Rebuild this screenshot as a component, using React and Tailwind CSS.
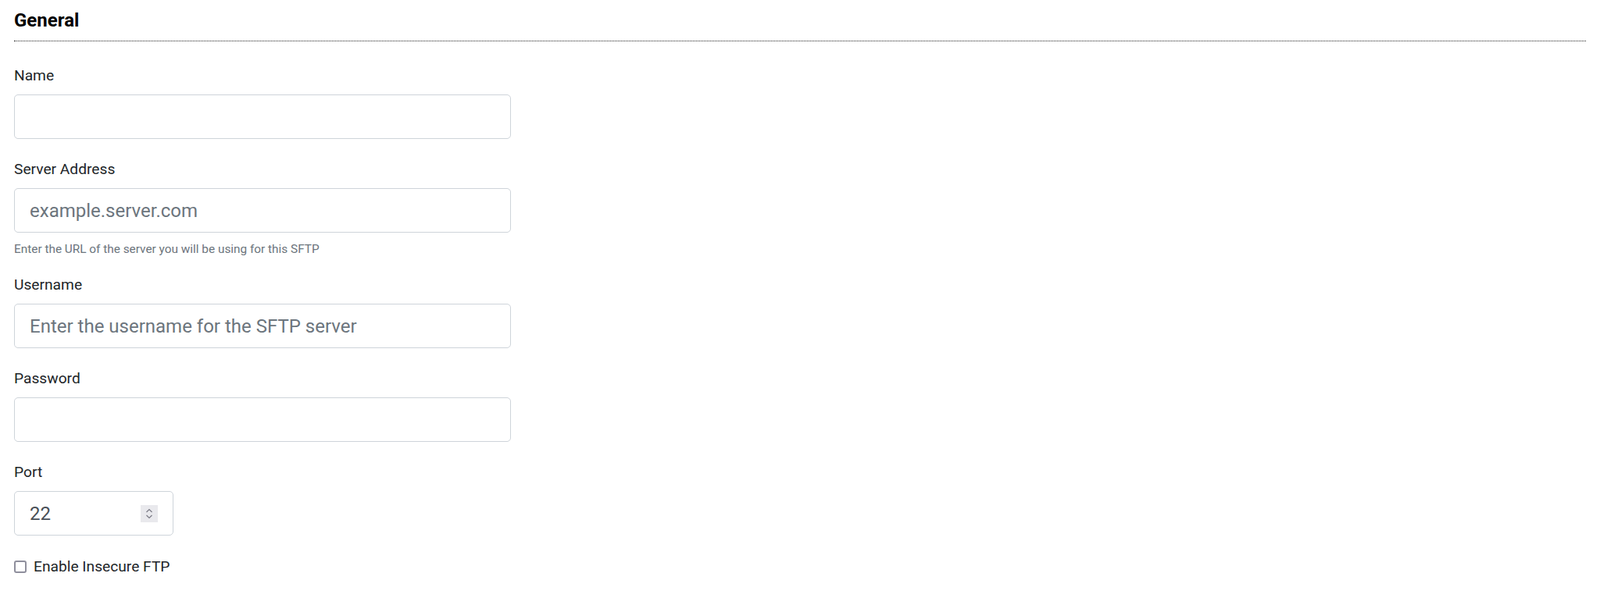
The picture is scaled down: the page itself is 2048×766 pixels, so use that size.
import React from "react";

const Label = ({ children }) => (
  <div className="h-6 text-[19.2px] leading-[26px] text-[#212529]">{children}</div>
);

const TextField = ({ placeholder, type = "text" }) => (
  <input
    type={type}
    placeholder={placeholder}
    className="mt-[13px] block h-[57px] w-[636px] rounded-[5px] border border-[#ced4da] bg-white px-[19px] text-[24px] text-[#495057] placeholder:text-[#6c757d] outline-none"
  />
);

const Spinner = () => (
  <div className="flex h-[22px] w-[22px] flex-col items-center justify-center gap-[2px] bg-[#e9e9ed]">
    <svg width="10" height="6" viewBox="0 0 10 6" fill="none">
      <path d="M1.5 5L5 1.5L8.5 5" stroke="#7a7a85" strokeWidth="1.2" />
    </svg>
    <svg width="10" height="6" viewBox="0 0 10 6" fill="none">
      <path d="M1.5 1L5 4.5L8.5 1" stroke="#7a7a85" strokeWidth="1.2" />
    </svg>
  </div>
);

export default function App() {
  return (
    <div className="min-h-screen bg-white px-[18px] pt-3 font-['Roboto',sans-serif]">
      <div className="border-b border-dotted border-[#222] pb-3">
        <h2 className="h-7 text-[24px] font-bold leading-7 text-black">General</h2>
      </div>

      <div className="mt-[31px] mb-[26px]">
        <Label>Name</Label>
        <TextField />
      </div>

      <div className="mb-[23px]">
        <Label>Server Address</Label>
        <TextField placeholder="example.server.com" />
        <p className="mt-[11px] h-5 text-[15.36px] leading-5 text-[#6c757d]">
          Enter the URL of the server you will be using for this SFTP
        </p>
      </div>

      <div className="mb-[26px]">
        <Label>Username</Label>
        <TextField placeholder="Enter the username for the SFTP server" />
      </div>

      <div className="mb-[26px]">
        <Label>Password</Label>
        <TextField type="password" />
      </div>

      <div className="mb-[28px]">
        <Label>Port</Label>
        <div className="mt-[13px] flex h-[57px] w-[204px] items-center rounded-[5px] border border-[#ced4da] bg-white pl-[19px] pr-[19px]">
          <input
            type="text"
            defaultValue="22"
            className="min-w-0 flex-1 bg-transparent text-[24px] text-[#495057] outline-none"
          />
          <Spinner />
        </div>
      </div>

      <label className="flex h-6 items-center gap-[9px] text-[19.2px] leading-6 text-[#212529]">
        <span className="block h-4 w-4 rounded-[3px] border-2 border-[#8f8f9d] bg-white" />
        Enable Insecure FTP
      </label>
    </div>
  );
}
